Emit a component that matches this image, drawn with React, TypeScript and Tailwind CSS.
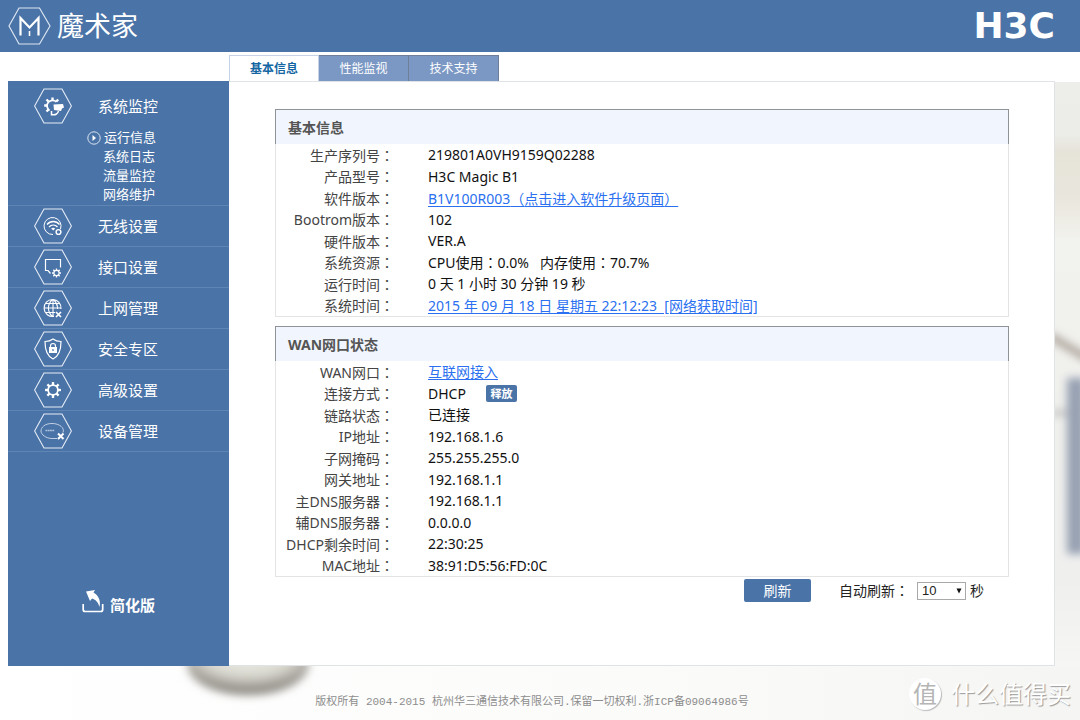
import { useState } from "react";
import type { ReactNode } from "react";

const RUN_INFO: [string, ReactNode][] = [
  ["生产序列号", "219801A0VH9159Q02288"],
  ["产品型号", "H3C Magic B1"],
  ["软件版本", <TextLink key="v">B1V100R003<Punct>（</Punct>点击进入软件升级页面<Punct>）</Punct></TextLink>],
  ["Bootrom版本", "102"],
  ["硬件版本", "VER.A"],
  ["系统资源", <>CPU使用<Punct>：</Punct>0.0%&nbsp;&nbsp; 内存使用<Punct>：</Punct>70.7%</>],
  ["运行时间", "0 天 1 小时 30 分钟 19 秒"],
  ["系统时间", <TextLink key="t">2015 年 09 月 18 日 星期五 22:12:23&nbsp; [网络获取时间]</TextLink>],
];

const WAN_INFO: [string, ReactNode][] = [
  ["WAN网口", <TextLink key="w">互联网接入</TextLink>],
  [
    "连接方式",
    <span key="d" className="flex items-center gap-5">
      DHCP
      <button type="button" className="h-[17px] w-[31px] rounded-xs bg-[#4a73a7] text-[11px] leading-[17px] font-bold text-white">
        释放
      </button>
    </span>,
  ],
  ["链路状态", "已连接"],
  ["IP地址", "192.168.1.6"],
  ["子网掩码", "255.255.255.0"],
  ["网关地址", "192.168.1.1"],
  ["主DNS服务器", "192.168.1.1"],
  ["辅DNS服务器", "0.0.0.0"],
  ["DHCP剩余时间", "22:30:25"],
  ["MAC地址", "38:91:D5:56:FD:0C"],
];

const SUB_ITEMS = ["系统日志", "流量监控", "网络维护"];

const NAV_ITEMS = [
  { label: "无线设置", Icon: IconWifi },
  { label: "接口设置", Icon: IconPort },
  { label: "上网管理", Icon: IconGlobe },
  { label: "安全专区", Icon: IconShield },
  { label: "高级设置", Icon: IconGear },
  { label: "设备管理", Icon: IconDevice },
];

const TABS = ["基本信息", "性能监视", "技术支持"];

// Full-width punctuation centred in its box
function Punct({ children }: { children: ReactNode }) {
  return <span className="font-['Noto_Sans_CJK_TC',sans-serif]">{children}</span>;
}

function TextLink({ children }: { children: ReactNode }) {
  return <a href="#" className="text-[#2a70f0] underline underline-offset-2">{children}</a>;
}

// ── Sidebar icons ─────────────────────────────────────────────────────────────
function Hexagon({ children }: { children: ReactNode }) {
  return (
    <svg viewBox="0 0 38 36" fill="none" stroke="#fff" className="h-9 w-[38px] shrink-0" aria-hidden="true">
      <path d="M10 1h18l9.400 17L28 35H10L.6 18z" stroke="#e6edf6" strokeWidth="1.1" />
      {children}
    </svg>
  );
}

// Ring with eight square teeth
function Cog({ cx, cy, r, width }: { cx: number; cy: number; r: number; width: number }) {
  return (
    <>
      <circle cx={cx} cy={cy} r={r} strokeWidth={width} />
      {[0, 45, 90, 135, 180, 225, 270, 315].map((angle) => (
        <path
          key={angle}
          d={`M${cx} ${cy - r}v${-width * 1.7}`}
          strokeWidth={width * 1.3}
          transform={`rotate(${angle} ${cx} ${cy})`}
        />
      ))}
    </>
  );
}

function IconMonitor() {
  return (
    <Hexagon>
      <path d="M22.500 14A5.500 5.500 0 1 0 15.500 22.400" strokeWidth="1.800" />
      <path d="M18.500 12V9.500M14.500 13.500l-2-2M13 17.500h-2.800M14.500 21.500l-2 2M22.300 13.500l1.900-2" strokeWidth="2.400" />
      <path d="M19.500 16.500l9.500-.5 1 3.500-2 1-1 2.500-7-1z" fill="#fff" stroke="none" />
      <path d="M17.500 23v4.500M17.500 26.500c3.500 1 6.500-.5 7-3.500" strokeWidth="1.500" />
    </Hexagon>
  );
}

function IconWifi() {
  return (
    <Hexagon>
      <path d="M26.500 21A8.500 8.500 0 1 0 19 26.500" />
      <path d="M13 16.500c3.500-4 9-4 12.500 0M15 19c2.500-2.500 6-2.500 8.500 0" strokeWidth="1.300" />
      <path d="M17.200 20.500c1.300-1 2.800-1 4 0l-2 2z" fill="#fff" stroke="none" />
      <circle cx="24.500" cy="24" r="2.400" strokeWidth="1.400" />
    </Hexagon>
  );
}

function IconPort() {
  return (
    <Hexagon>
      <path d="M26.500 18.500V10.500h-15v11h2.500l2.500 3" strokeWidth="1.200" />
      <Cog cx={22.5} cy={24} r={2.6} width={1.1} />
    </Hexagon>
  );
}

function IconGlobe() {
  return (
    <Hexagon>
      <path d="M27 19A8.500 8.500 0 1 0 20 26.400M19 9.500v17M10.500 18h16.500M12 13.500h14M12 22.500h9M18.500 9.500c-5.500 5-5.500 12 0 17M19.500 9.500c3 3 4.300 6 4 9.500" strokeWidth="1.100" />
      <path d="M22 22l5 5M27 22l-5 5" strokeWidth="1.700" />
    </Hexagon>
  );
}

function IconShield() {
  return (
    <Hexagon>
      <path d="M19 8c2.500 2 5 2.500 8 2.500 0 8-1.500 14.500-8 17.500-6.500-3-8-9.500-8-17.500 3 0 5.500-.5 8-2.500z" strokeWidth="1.200" />
      <rect x="15" y="16" width="8" height="6" fill="#fff" stroke="none" />
      <path d="M16.500 16.500v-1.500a2.500 2.500 0 0 1 5 0v1.500" strokeWidth="1.200" />
      <path d="M19 18v2" stroke="#4a73a7" strokeWidth="1.200" />
    </Hexagon>
  );
}

function IconGear() {
  return (
    <Hexagon>
      <Cog cx={19} cy={18} r={4.9} width={1.8} />
    </Hexagon>
  );
}

function IconDevice() {
  return (
    <Hexagon>
      <path d="M29 19.500c2-4.500-3.500-9-11-9s-11 4-11 7.500 5 7.500 11 7.500h5" stroke="#c3d1e4" />
      <path d="M11.500 17.500h9" stroke="#b4c6de" strokeWidth="1.600" strokeDasharray="1.800 .5" />
      <path d="M24 20.500l5.500 5.500M29.500 20.500L24 26" strokeWidth="2" />
    </Hexagon>
  );
}

function Backdrop() {
  return (
    <svg viewBox="0 0 1080 720" preserveAspectRatio="xMaxYMin slice" className="absolute inset-0 -z-10 h-full w-full" aria-hidden="true">
      <defs>
        <linearGradient id="wall" x1="0" y1="0" x2="0" y2="1">
          <stop offset="0" stopColor="#edeeea" />
          <stop offset=".09" stopColor="#ecece8" />
          <stop offset=".12" stopColor="#e6e3d9" />
          <stop offset=".2" stopColor="#e9e7dd" />
          <stop offset=".27" stopColor="#f2f2ee" />
          <stop offset=".6" stopColor="#efefec" />
          <stop offset=".85" stopColor="#efefee" />
          <stop offset="1" stopColor="#f6f6f5" />
        </linearGradient>
        <linearGradient id="floor" x1="0" y1="0" x2="1" y2="0">
          <stop offset="0" stopColor="#fff" />
          <stop offset=".6" stopColor="#fbfbfa" />
          <stop offset="1" stopColor="#f5f5f4" />
        </linearGradient>
        <radialGradient id="dish" cx=".5" cy=".3" r=".68">
          <stop offset="0" stopColor="#eeeee9" />
          <stop offset=".55" stopColor="#dddcd3" />
          <stop offset="1" stopColor="#7f7b74" />
        </radialGradient>
        <filter id="soft" x="-50%" y="-50%" width="200%" height="200%">
          <feGaussianBlur stdDeviation="4" />
        </filter>
      </defs>
      <rect y="666" width="1080" height="54" fill="url(#floor)" />
      <rect x="1040" y="82" width="40" height="586" fill="url(#wall)" />
      <g filter="url(#soft)">
        <ellipse cx="248" cy="664" rx="61" ry="31" fill="url(#dish)" />
        <path d="M1050 336l40 24" stroke="#a89f95" strokeWidth="7" />
        <path d="M1050 413h30" stroke="#c4c4c4" strokeWidth="6" />
        <path d="M1076 378v176" stroke="#97a1b2" strokeWidth="18" />
      </g>
    </svg>
  );
}

function Panel({ title, rows }: { title: string; rows: [string, ReactNode][] }) {
  return (
    <section>
      <h2 className="h-[35px] border border-b-0 border-[#8f9296] bg-[#f1f6fe] px-3 text-sm leading-[35px] font-bold text-[#555]">
        {title}
      </h2>
      <div className="border border-t-0 border-[#e4e4e4]">
        <table className="w-full text-sm leading-5">
          <tbody>
            {rows.map(([label, value]) => (
              <tr key={label} className="odd:h-[22px] even:h-[21px]">
                <th scope="row" className="w-[118px] p-0 text-right font-normal whitespace-nowrap text-[#444]">
                  {label}
                  <Punct>：</Punct>
                </th>
                <td className="p-0 pl-[34px] text-[#111]">{value}</td>
              </tr>
            ))}
          </tbody>
        </table>
      </div>
    </section>
  );
}

function Sidebar() {
  return (
    <nav aria-label="主菜单" className="flex w-[221px] shrink-0 flex-col bg-[#4a73a7] text-white">
      <div className="border-b border-[#5f85b5] pt-[7px]">
        <a href="#" className="flex items-center gap-[26px] pl-[26px] text-[15px]">
          <IconMonitor />
          系统监控
        </a>
        <ul className="pt-1 pb-px text-[13px] leading-[19px]">
          <li>
            <a href="#" className="flex items-center gap-[3px] pl-[79px]">
              <svg viewBox="0 0 14 14" fill="none" stroke="#dbe5f1" className="h-3.5 w-3.5" aria-hidden="true">
                <circle cx="7" cy="7" r="6.200" />
                <path d="M5.500 4l3.500 3-3.500 3z" fill="#fff" stroke="none" />
              </svg>
              运行信息
            </a>
          </li>
          {SUB_ITEMS.map((item) => (
            <li key={item}>
              <a href="#" className="block pl-[95px]">{item}</a>
            </li>
          ))}
        </ul>
      </div>

      {NAV_ITEMS.map(({ label, Icon }) => (
        <a key={label} href="#" className="flex h-[41px] items-center gap-[26px] border-b border-[#5f85b5] pl-[26px] text-[15px]">
          <Icon />
          {label}
        </a>
      ))}

      <a href="#" className="mt-auto mb-[51px] flex items-end gap-1.5 pl-[74px] text-[15px] leading-5 font-bold">
        <svg viewBox="0 0 22 24" fill="none" className="mb-0.5 h-6 w-[22px]" aria-hidden="true">
          <path d="M1.200 15v5.500q0 2 2 2h15.500q2 0 2-2V15" stroke="#fff" strokeWidth="1.700" />
          <path d="M4 2.500l9-1.500-1.500 2.500c5 3 7.500 8 6 14.500-1-4-3.500-7.500-7.500-8.500L8 12z" fill="#fff" />
        </svg>
        简化版
      </a>
    </nav>
  );
}

export default function App() {
  const [tab, setTab] = useState(TABS[0]);

  return (
    <div className="relative isolate min-h-screen bg-white font-['Noto_Sans','Noto_Sans_CJK_SC',sans-serif]">
      <Backdrop />

      <header className="flex h-[52px] items-center justify-between bg-[#4a73a7] pr-[25px] pl-2 text-white">
        <div className="flex items-center gap-1.5">
          <svg viewBox="0 0 43 40" fill="none" stroke="#fff" className="h-10 w-[43px]" aria-hidden="true">
            <path d="M11 2h20.500l10.500 18-10.500 18H11L1 20z" stroke="#dbe5f1" strokeWidth="1.200" />
            <path d="M12.500 29.500V12l9 9.500 9-9.500v17.500" strokeWidth="2.200" />
            <path d="M21.500 25v5" strokeWidth="1.600" />
          </svg>
          <span className="text-[27px] leading-[50px]">魔术家</span>
        </div>
        <span className="font-['DejaVu_Sans',sans-serif] text-[36px] leading-[48px] font-bold">H3C</span>
      </header>

      <div className="flex h-[29px] items-end bg-white pl-[229px]" role="tablist">
        {TABS.map((name) => (
          <button
            key={name}
            type="button"
            role="tab"
            aria-selected={name === tab}
            onClick={() => setTab(name)}
            className={
              name === tab
                ? "h-[26px] w-[90px] border border-b-0 border-[#c5d3e4] bg-white text-xs font-bold text-[#1466a3]"
                : "h-[26px] w-[90px] border-t border-r border-[#6f7f99] bg-[#7b98c4] text-xs text-white"
            }
          >
            {name}
          </button>
        ))}
      </div>

      <div className="flex pr-[25px]">
        <div className="w-2 shrink-0 bg-white" />
        <Sidebar />
        <main className="min-w-0 flex-1 border border-l-0 border-[#dfe3e6] bg-white pt-[27px] pr-[45px] pb-[63px] pl-[46px]">
          <div className="flex flex-col gap-[9px]">
            <Panel title="基本信息" rows={RUN_INFO} />
            <Panel title="WAN网口状态" rows={WAN_INFO} />
          </div>
          <div className="mt-[2px] flex items-center justify-end pr-[25px] text-sm text-[#222]">
            <button type="button" className="mr-7 h-[23px] w-[67px] rounded-xs bg-[#4a73a7] leading-[23px] text-white">
              刷新
            </button>
            <label htmlFor="interval" className="mr-2">
              自动刷新<Punct>：</Punct>
            </label>
            <div className="relative mr-1 flex">
              <select
                id="interval"
                defaultValue="10"
                className="h-[18px] w-[49px] appearance-none border border-[#a9a9a9] bg-white pl-1 font-['Liberation_Sans',sans-serif] text-[13px] leading-4"
              >
                <option>10</option>
                <option>30</option>
                <option>60</option>
              </select>
              <svg viewBox="0 0 6 6" className="pointer-events-none absolute top-[6px] right-1 h-1.5 w-1.5" aria-hidden="true">
                <path d="M.5 .5h5L3 5.500z" fill="#111" />
              </svg>
            </div>
            秒
          </div>
        </main>
      </div>

      <footer className="flex h-[54px] items-center pt-[18px]">
        <p className="w-full pr-4 text-center font-['Liberation_Mono','Noto_Sans_CJK_SC',monospace] text-[11px] text-[#8d8d8d]">
          版权所有 2004-2015 杭州华三通信技术有限公司.保留一切权利.浙ICP备09064986号
        </p>
      </footer>

      {/* Watermark */}
      <div className="absolute right-[9px] bottom-2.5 flex items-center gap-2.5 text-2xl leading-8 text-white [text-shadow:1px_1px_1px_#999]">
        <span className="h-8 w-8 rounded-full bg-white text-center text-[#b5b5b5] shadow-[1px_1px_1px_#bbb] [text-shadow:none]">值</span>
        什么值得买
      </div>
    </div>
  );
}
